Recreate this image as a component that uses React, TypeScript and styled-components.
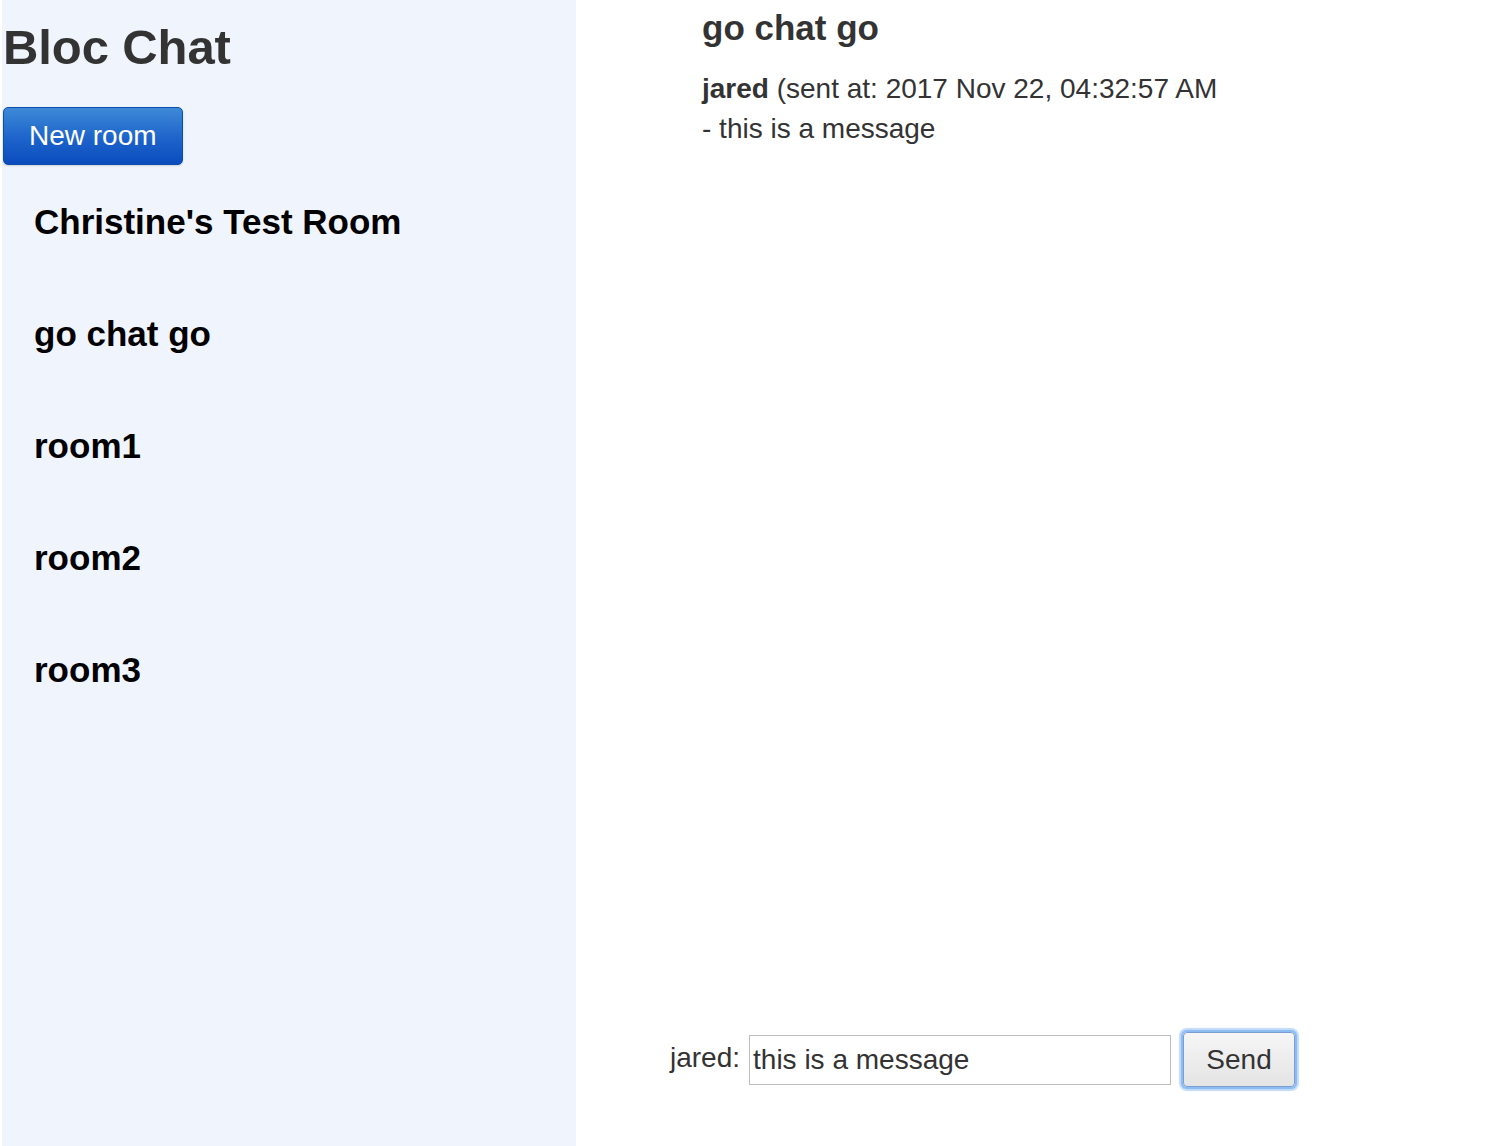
import React from "react";
import styled, { createGlobalStyle } from "styled-components";

const GlobalStyle = createGlobalStyle`
  html, body {
    margin: 0;
    padding: 0;
    background: #ffffff;
  }
  body {
    font-family: "Liberation Sans", Arial, Helvetica, sans-serif;
  }
  * { box-sizing: border-box; }
`;

const Layout = styled.div`
  display: flex;
  min-height: 100vh;
  padding-left: 2px;
`;

const Sidebar = styled.aside`
  width: 574px;
  flex-shrink: 0;
  background: #f0f5fd;
  display: flex;
  flex-direction: column;
  align-items: flex-start;
`;

const AppTitle = styled.h1`
  margin: 19px 0 0 1px;
  font-size: 49px;
  line-height: 56px;
  font-weight: 700;
  color: #333333;
  letter-spacing: -0.1px;
`;

const NewRoomButton = styled.button`
  margin: 32px 0 0 1px;
  height: 58px;
  padding: 0 25px;
  font-family: inherit;
  font-size: 28px;
  color: #ffffff;
  background: linear-gradient(#3d8ad6, #1d63cb 55%, #0a4cbd);
  border: 1px solid #0d4cb0;
  border-radius: 5px;
  box-shadow: 0 1px 2px rgba(0, 0, 0, 0.15);
  cursor: pointer;
`;

const RoomList = styled.ul`
  list-style: none;
  margin: 37px 0 0 0;
  padding: 0 0 0 32px;
  display: flex;
  flex-direction: column;
  gap: 72px;
`;

const RoomItem = styled.li`
  font-size: 35px;
  line-height: 40px;
  font-weight: 700;
  color: #000000;
`;

const Main = styled.main`
  flex: 1;
  display: flex;
  flex-direction: column;
  padding: 8px 0 0 94px;
`;

const Header = styled.section`
  padding-left: 32px;
`;

const RoomTitle = styled.h2`
  margin: 0;
  font-size: 35px;
  line-height: 40px;
  font-weight: 700;
  color: #333333;
`;

const Message = styled.div`
  margin-top: 21px;
  font-size: 28px;
  line-height: 40px;
  color: #333333;
`;

const Author = styled.strong`
  font-weight: 700;
`;

const Composer = styled.form`
  margin-top: auto;
  margin-bottom: 59px;
  display: flex;
  align-items: center;
`;

const ComposerLabel = styled.label`
  font-size: 28px;
  color: #333333;
  margin-right: 9px;
  padding-bottom: 4px;
`;

const MessageInput = styled.input`
  width: 422px;
  height: 50px;
  padding: 0 3px;
  font-family: inherit;
  font-size: 28px;
  color: #333333;
  border: 1px solid #bdbdbd;
  background: #ffffff;
  outline: none;
`;

const SendButton = styled.button`
  margin-left: 12px;
  width: 112px;
  height: 55px;
  font-family: inherit;
  font-size: 28px;
  color: #333333;
  background: linear-gradient(#f6f6f6, #e4e4e4);
  border: 1px solid #7a9dd2;
  border-radius: 4px;
  box-shadow: 0 0 0 2px #8dbcf3, 0 0 1px 4px rgba(150, 195, 245, 0.6);
  cursor: pointer;
`;

const rooms = ["Christine's Test Room", "go chat go", "room1", "room2", "room3"];

export default function App() {
  return (
    <>
      <GlobalStyle />
      <Layout>
        <Sidebar>
          <AppTitle>Bloc Chat</AppTitle>
          <NewRoomButton type="button">New room</NewRoomButton>
          <RoomList>
            {rooms.map((r) => (
              <RoomItem key={r}>{r}</RoomItem>
            ))}
          </RoomList>
        </Sidebar>
        <Main>
          <Header>
            <RoomTitle>go chat go</RoomTitle>
            <Message>
              <div>
                <Author>jared</Author> (sent at: 2017 Nov 22, 04:32:57 AM
              </div>
              <div>- this is a message</div>
            </Message>
          </Header>
          <Composer onSubmit={(e) => e.preventDefault()}>
            <ComposerLabel htmlFor="msg">jared:</ComposerLabel>
            <MessageInput id="msg" defaultValue="this is a message" />
            <SendButton type="submit">Send</SendButton>
          </Composer>
        </Main>
      </Layout>
    </>
  );
}
